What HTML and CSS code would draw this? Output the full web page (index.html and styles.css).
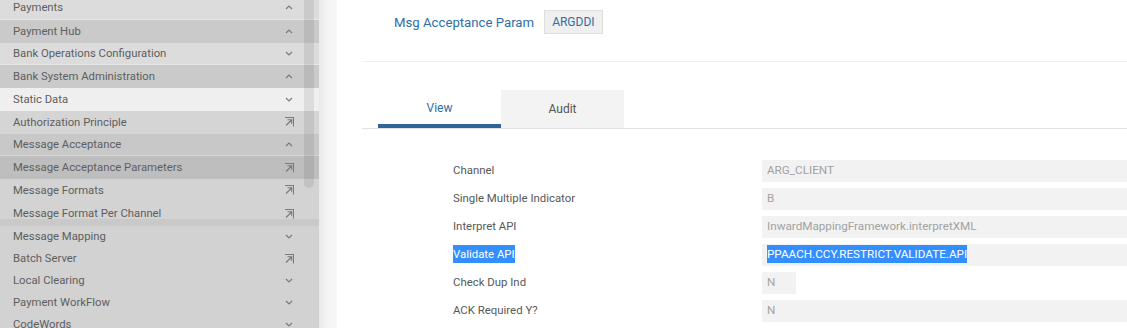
FILE: index.html
```html
<!DOCTYPE html>
<html lang="en">
<head>
  <meta charset="UTF-8">
  <title>Msg Acceptance Param</title>
  <link rel="stylesheet" href="styles.css">
</head>
<body>
<div class="page">
  <!-- left menu -->
  <div class="side">
    <ul class="menu">
      <li class="m1">Payments<svg class="ico" viewBox="0 0 8 5"><path d="M1 4L4 1L7 4"/></svg></li>
      <li class="m2">Payment Hub<svg class="ico" viewBox="0 0 8 5"><path d="M1 4L4 1L7 4"/></svg></li>
      <li class="m1">Bank Operations Configuration<svg class="ico" viewBox="0 0 8 5"><path d="M1 1L4 4L7 1"/></svg></li>
      <li class="m2">Bank System Administration<svg class="ico" viewBox="0 0 8 5"><path d="M1 4L4 1L7 4"/></svg></li>
      <li class="m3">Static Data<svg class="ico" viewBox="0 0 8 5"><path d="M1 1L4 4L7 1"/></svg></li>
      <li class="m4">Authorization Principle<svg class="go" viewBox="0 0 10 10"><path d="M1 .5H9.5V9.5M2 8.5L7.5 3M3.5 2.8H7.7V7"/></svg></li>
      <li class="m5">Message Acceptance<svg class="ico" viewBox="0 0 8 5"><path d="M1 4L4 1L7 4"/></svg></li>
      <li class="m6">Message Acceptance Parameters<svg class="go" viewBox="0 0 10 10"><path d="M1 .5H9.5V9.5M2 8.5L7.5 3M3.5 2.8H7.7V7"/></svg></li>
      <li class="m7">Message Formats<svg class="go" viewBox="0 0 10 10"><path d="M1 .5H9.5V9.5M2 8.5L7.5 3M3.5 2.8H7.7V7"/></svg></li>
      <li class="m7 end">Message Format Per Channel<svg class="go" viewBox="0 0 10 10"><path d="M1 .5H9.5V9.5M2 8.5L7.5 3M3.5 2.8H7.7V7"/></svg></li>
      <li class="m8">Message Mapping<svg class="ico" viewBox="0 0 8 5"><path d="M1 1L4 4L7 1"/></svg></li>
      <li class="m8">Batch Server<svg class="go" viewBox="0 0 10 10"><path d="M1 .5H9.5V9.5M2 8.5L7.5 3M3.5 2.8H7.7V7"/></svg></li>
      <li class="m8">Local Clearing<svg class="ico" viewBox="0 0 8 5"><path d="M1 1L4 4L7 1"/></svg></li>
      <li class="m8">Payment WorkFlow<svg class="ico" viewBox="0 0 8 5"><path d="M1 1L4 4L7 1"/></svg></li>
      <li class="m8">CodeWords<svg class="ico" viewBox="0 0 8 5"><path d="M1 1L4 4L7 1"/></svg></li>
    </ul>
    <div class="thumb"></div>
  </div>
  <div class="gutter"></div>

  <!-- detail -->
  <div class="main">
    <div class="head">
      <span class="title">Msg Acceptance Param</span>
      <span class="key">ARGDDI</span>
    </div>
    <div class="tabs">
      <div class="tab on">View</div>
      <div class="tab">Audit</div>
    </div>
    <div class="fields">
      <div class="lbl">Channel</div>
      <div class="val">ARG_CLIENT</div>
      <div class="lbl">Single Multiple Indicator</div>
      <div class="val">B</div>
      <div class="lbl">Interpret API</div>
      <div class="val">InwardMappingFramework.interpretXML</div>
      <div class="lbl"><span class="sel">Validate API</span></div>
      <div class="val"><span class="sel">PPAACH.CCY.RESTRICT.VALIDATE.API</span></div>
      <div class="lbl">Check Dup Ind</div>
      <div class="val short">N</div>
      <div class="lbl">ACK Required Y?</div>
      <div class="val">N</div>
    </div>
  </div>
</div>
</body>
</html>
```

FILE: styles.css
```css
* {
  padding: 0;
  margin: 0;
  list-style: none;
  box-sizing: border-box;
}

body {
  font-family: Roboto, "Liberation Sans", sans-serif;
  font-size: 12px;
  background: #fff;
  overflow: hidden;
}

.page {
  display: flex;
  height: 328px;
}

/* left menu */
.side {
  width: 319px;
  flex: none;
  position: relative;
  overflow: hidden;
  background: #d2d2d2;
}

.menu {
  margin-top: -3px;
}

.menu li {
  height: 22.75px;
  padding: 0 25px 0 13px;
  display: flex;
  align-items: center;
  justify-content: space-between;
  font-size: 11.3px;
  color: #5e5e5e;
}

.menu li.m1 { background: #dcdcdc; border-bottom: 1px solid #e6e6e6; }
.menu li.m2 { background: #cacaca; }
.menu li.m3 { background: #efefef; }
.menu li.m4 { background: #d5d5d5; }
.menu li.m5 { background: #c8c8c8; border-bottom: 1px solid #d6d6d6; }
.menu li.m6 { background: #bebebe; }
.menu li.m7 { background: #d3d3d3; }
.menu li.m8 { background: #d2d2d2; height: 22px; }

.menu li.end {
  height: 23.75px;
  box-shadow: inset 0 -7px 0 #c9c9c9;
}

.ico {
  width: 8px;
  height: 5px;
  margin-right: 1px;
  fill: none;
  stroke: #7a7a7a;
  stroke-width: 1.2;
}

.go {
  width: 10px;
  height: 10px;
  fill: none;
  stroke: #7a7a7a;
  stroke-width: 1.1;
}

.thumb {
  position: absolute;
  left: 304px;
  top: 0;
  width: 10px;
  height: 188px;
  border-radius: 0 0 5px 5px;
  background: rgba(0, 0, 0, 0.08);
}

.gutter {
  width: 18px;
  flex: none;
  background: linear-gradient(to right, #e8e8e8, #f4f4f4 40%, #f8f8f8);
}

/* detail */
.main {
  flex: 1;
  padding: 10px 0 0 25px;
}

.head {
  display: flex;
  align-items: center;
  gap: 10px;
  padding: 0 0 27px 32px;
  border-bottom: 1px solid #f0f0f0;
}

.title {
  font-size: 13.2px;
  color: #2f6ea6;
}

.key {
  height: 24px;
  line-height: 22px;
  padding: 0 7px;
  background: #efefef;
  border: 1px solid #dedede;
  color: #2f6ea6;
}

.tabs {
  display: flex;
  margin-top: 28px;
  padding-left: 16px;
  border-bottom: 1px solid #e2e2e2;
}

.tab {
  width: 123px;
  height: 38px;
  line-height: 39px;
  text-align: center;
  color: #555;
  background: #f3f3f3;
}

.tab.on {
  background: #fff;
  color: #2f6ea6;
  line-height: 37px;
  border-bottom: 4px solid #2e6699;
}

.fields {
  display: grid;
  grid-template-columns: 309px 1fr;
  row-gap: 6px;
  margin-top: 31px;
  padding-left: 91px;
}

.lbl {
  height: 22px;
  line-height: 20px;
  font-size: 11.4px;
  color: #585858;
}

.val {
  height: 22px;
  line-height: 20px;
  padding-left: 5px;
  font-size: 11.7px;
  background: #f2f2f2;
  color: #a2a2a2;
}

.val.short {
  width: 34px;
}

.sel {
  background: #338fff;
  color: #fff;
  padding: 2px 0;
}
```
